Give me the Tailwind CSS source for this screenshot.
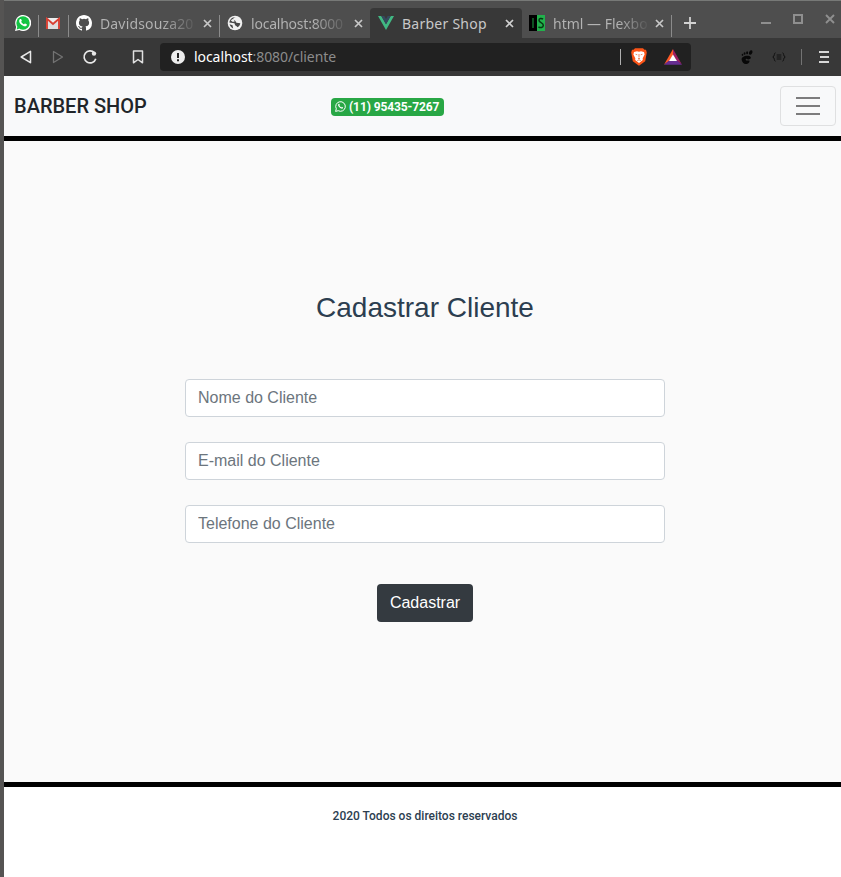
<!DOCTYPE html>
<html lang="pt-BR">
<head>
<meta charset="utf-8">
<title>Barber Shop</title>
<script src="https://cdn.jsdelivr.net/npm/@tailwindcss/browser@4"></script>
</head>
<body class="w-[841px] h-[877px] overflow-hidden bg-[#4e4e4e] border-l-4 border-[#555453] font-['Liberation_Sans',sans-serif]">
<div class="flex h-full flex-col">
  <!-- Tab strip -->
  <div class="flex h-[38px] shrink-0 items-end border-t border-[#777977] bg-[#4e4e4e] font-['Noto_Sans',sans-serif] text-[14px] text-[#b4b4b4] whitespace-nowrap">
    <div class="flex h-[30px] w-[34px] items-center pl-[11px]">
      <svg class="size-4" viewBox="0 0 16 16"><path d="M0 16l1.2-4.1A8 8 0 1 1 4.3 15z" fill="#fff"/><circle cx="8" cy="8" r="6.7" fill="#13c443"/><path d="M1.6 14.4l.9-3.2 2.2 2.3z" fill="#13c443"/><path d="M5.2 4.1c.4-.3.9-.2 1.1.3l.5 1.2c.1.4-.3.8-.6 1.1.7 1.3 1.6 2.1 2.8 2.6.5-.5.7-.9 1.1-.8l1.6.8c.4.2.1 1.2-.4 1.6-1.4 1-3.5 0-4.9-1.1C4.900 8.400 3.900 6.900 4.200 5.400c.1-.6.5-1 1-1.300z" fill="#fff"/></svg>
    </div>
    <div class="mb-px h-[22px] w-px bg-[#8b8b8b]"></div>
    <div class="flex h-[30px] w-[29px] items-center pl-[6px]">
      <svg class="h-[13px] w-4" viewBox="0 0 16 13"><path d="M1.500 1h13v11h-13z" fill="#eee"/><path d="M3 4l5 4 5-4v8H3z" fill="#dedede"/><path d="M2 12V1.800L8 6.900l6-5.100V12" fill="none" stroke="#d93f32" stroke-width="1.900"/></svg>
    </div>
    <div class="mb-px h-[22px] w-px bg-[#8b8b8b]"></div>
    <div class="flex h-[30px] w-[150px] items-center pl-[7px]">
      <svg class="size-4 shrink-0" viewBox="0 0 16 16" fill="#fff"><path d="M8 0C3.580 0 0 3.580 0 8c0 3.540 2.290 6.530 5.470 7.590.4.070.55-.17.55-.38 0-.19-.01-.82-.01-1.490-2.010.37-2.530-.49-2.690-.94-.09-.23-.48-.94-.82-1.130-.28-.15-.68-.52-.01-.53.63-.01 1.080.58 1.230.82.72 1.210 1.870.87 2.330.66.07-.52.28-.87.51-1.070-1.780-.2-3.640-.89-3.640-3.950 0-.87.31-1.590.82-2.150-.08-.2-.36-1.020.08-2.120 0 0 .67-.21 2.200.82a7.600 7.600 0 0 1 4 0c1.530-1.040 2.200-.82 2.200-.82.44 1.100.16 1.920.08 2.120.51.56.82 1.270.82 2.150 0 3.070-1.870 3.750-3.650 3.950.29.25.54.73.54 1.480 0 1.070-.01 1.930-.01 2.200 0 .21.15.46.55.38A8.010 8.010 0 0 0 16 8c0-4.420-3.580-8-8-8z"/></svg>
      <span class="ml-2 w-[95px] overflow-hidden bg-linear-to-r from-[#b4b4b4] from-65% to-[#b4b4b4]/10 bg-clip-text text-transparent tracking-[.15px]">Davidsouza20</span>
      <svg class="ml-2 size-[9px]" viewBox="0 0 9 9"><path d="M1 1l7 7M8 1L1 8" stroke="#c8c8c8" stroke-width="1.700"/></svg>
    </div>
    <div class="mb-px h-[22px] w-px bg-[#8b8b8b]"></div>
    <div class="flex h-[30px] w-[150px] items-center pl-[7px]">
      <svg class="size-4 shrink-0" viewBox="0 0 16 16"><circle cx="8" cy="8" r="7.300" fill="#f0f0f0"/><path d="M9.500 2.300C7 2.600 5.600 3.500 6.600 4.800c.7.900 2 .7 2.200 2 .2 1.100 1.500 1.300 2.900 1.100l1.600.3c-.3 1.800-1.300 3.200-2.700 4.100L9.300 10.900 7.800 10c.6-1.500-.6-2.200-2.300-2L2.300 7.600C2.600 5 4 3.200 6 2.400z" fill="#484848"/><path d="M6.500 3.500L3.800 5.200l1.600 1.500 2.200.1z" fill="#f0f0f0"/><path d="M2.600 9.300l2.900.9.700 3.200C4.400 12.700 3.200 11.300 2.600 9.300z" fill="#484848"/></svg>
      <span class="ml-2 w-[95px] overflow-hidden bg-linear-to-r from-[#b4b4b4] from-65% to-[#b4b4b4]/10 bg-clip-text text-transparent tracking-[-.22px]">localhost:8000</span>
      <svg class="ml-2 size-[9px]" viewBox="0 0 9 9"><path d="M1 1l7 7M8 1L1 8" stroke="#c8c8c8" stroke-width="1.700"/></svg>
    </div>
    <div class="flex h-[30px] w-[152px] items-center rounded-t bg-[#383838] pl-2 text-[#c8c8c8]">
      <svg class="size-4 shrink-0" viewBox="0 0 16 16"><path d="M0 1h3.300L8 9.300 12.700 1H16L8 15z" fill="#41b883"/><path d="M3.300 1h3L8 4l1.700-3h3L8 9.300z" fill="#35495e"/></svg>
      <span class="ml-2 w-[95px] tracking-[.25px]">Barber Shop</span>
      <svg class="ml-2 size-[9px]" viewBox="0 0 9 9"><path d="M1 1l7 7M8 1L1 8" stroke="#d0d0d0" stroke-width="1.700"/></svg>
    </div>
    <div class="flex h-[30px] w-[149px] items-center pl-[7px]">
      <svg class="size-4 shrink-0" viewBox="0 0 16 16"><path d="M0 0h8v16H0z"/><path d="M8 0h8v16H8z" fill="#22b14c"/><path d="M4 3v10" stroke="#14732f" stroke-width="1.400"/><path d="M14 4.200C12.500 3 10 3.200 10 5.300c0 2.700 4.300 2 4.300 5 0 2.500-3.100 2.800-4.800 1.500" fill="none" stroke="#063813" stroke-width="1.500"/></svg>
      <span class="ml-2 w-[94px] overflow-hidden bg-linear-to-r from-[#b4b4b4] from-70% to-[#b4b4b4]/10 bg-clip-text text-transparent">html — Flexbo</span>
      <svg class="ml-2 size-[9px]" viewBox="0 0 9 9"><path d="M1 1l7 7M8 1L1 8" stroke="#c8c8c8" stroke-width="1.700"/></svg>
    </div>
    <div class="mb-px h-[22px] w-px bg-[#8b8b8b]"></div>
    <div class="flex h-[30px] items-center pl-3">
      <svg class="size-3" viewBox="0 0 12 12"><path d="M6 0v12M0 6h12" stroke="#d2d2d2" stroke-width="1.800"/></svg>
    </div>
    <div class="ml-auto flex h-[37px] items-start gap-[22px] pt-3 pr-[6px]">
      <svg class="size-[10px] overflow-visible" viewBox="0 0 10 10"><path d="M0 10h10" stroke="#8f8f8f" stroke-width="2"/></svg>
      <svg class="size-[10px] overflow-visible" viewBox="0 0 10 10"><path d="M1 2h8v8H1z" fill="none" stroke="#8f8f8f" stroke-width="2"/></svg>
      <svg class="size-[10px] overflow-visible" viewBox="0 0 10 10"><path d="M1 2l8 8M9 2L1 10" stroke="#8f8f8f" stroke-width="1.900"/></svg>
    </div>
  </div>
  <!-- Address bar -->
  <div class="flex h-[38px] shrink-0 items-center bg-[#383838] pb-px font-['Noto_Sans',sans-serif] text-[14px]">
    <svg class="ml-4 h-4 w-3" viewBox="0 0 12 16"><path d="M10.500 2.300v11.400L1.200 8z" fill="none" stroke="#e8e8e8" stroke-width="1.500" stroke-linejoin="round"/></svg>
    <svg class="ml-5 h-4 w-3" viewBox="0 0 12 16"><path d="M1.500 2.500v11L10.500 8z" fill="none" stroke="#737373" stroke-width="1.300" stroke-linejoin="round"/></svg>
    <svg class="ml-[18px] size-4" viewBox="0 0 16 16"><path d="M12.500 3.800A6 6 0 1 0 13.800 9.700" fill="none" stroke="#e8e8e8" stroke-width="1.700"/><circle cx="12" cy="4.600" r="2.200" fill="#e8e8e8"/></svg>
    <svg class="ml-[34px] h-[14px] w-3" viewBox="0 0 12 14"><path d="M1.500 1h9v11.800L6 9.500l-4.500 3.300z" fill="none" stroke="#e0e0e0" stroke-width="1.500" stroke-linejoin="round"/></svg>
    <div class="ml-4 flex h-7 w-[531px] items-center rounded bg-[#212121] pl-[11px] text-[#8c8c8c]">
      <svg class="size-[14px]" viewBox="0 0 14 14"><circle cx="7" cy="7" r="7" fill="#ececec"/><path d="M7 3v5M7 9.300v1.900" stroke="#212121" stroke-width="2"/></svg>
      <span class="-mt-px ml-[9px] whitespace-nowrap tracking-[-.07px]"><span class="text-white">localhost</span>:8080/cliente</span>
      <div class="ml-auto h-4 w-px bg-[#b0b0b0]"></div>
      <svg class="ml-[10px] h-[18px] w-4" viewBox="0 0 16 18"><path d="M4 .3h8l1.500 1.500 1.500 0 .8 2.700-1.600 8.800L8 17.800l-6.200-4.500L.2 4.500 1 1.800l1.500 0z" fill="#fb5417"/><path d="M3 4l3-.7 2 .5 2-.5 3 .7.6 2.500-1.900 3.800.1 1.800L8 15l-3.800-2.900.1-1.800L2.400 6.500z" fill="#fff"/><path d="M4.600 6.300l1.700.5M11.400 6.300l-1.700.5M8 6v3.500M7 10.500h2M6.300 12.600l1.700-.8 1.700.8" fill="none" stroke="#e86b3c" stroke-width=".8"/></svg>
      <svg class="mr-[9px] ml-[17px] h-4 w-[18px]" viewBox="0 0 18 16"><path d="M9 0v7l-4 5-5 3.800z" fill="#ff5a26"/><path d="M9 0l9 15.800-5-3.800L9 6z" fill="#9e1f63"/><path d="M0 15.800l5-4.300h8l5 4.300z" fill="#662d91"/><path d="M9 5.400l4 6.600H5z" fill="#fff"/></svg>
    </div>
    <svg class="ml-[49px] h-[14px] w-[14px]" viewBox="0 0 14 14" fill="#080808"><ellipse cx="10.700" cy="2.500" rx="1.600" ry="2.400" transform="rotate(20 10.700 2.500)"/><ellipse cx="7.100" cy="2.700" rx="1" ry="1.500"/><ellipse cx="4.600" cy="3.500" rx=".9" ry="1.200"/><ellipse cx="2.500" cy="4.800" rx=".8" ry="1.100"/><path d="M1.700 10C.9 7 6 4.900 9.800 6.300c2 1 .8 3.200-1.500 3.100-1.300 0-1.700-.7-2.300-.5-.7.5-.2 1.600.8 1.700l2.600-.2c.5 2.100-1.300 3.600-3.600 3.600-2.200 0-3.700-1.800-4.100-4z"/></svg>
    <svg class="ml-[18px] h-3 w-[14px]" viewBox="0 0 14 12"><path d="M3.500 1.800C1.800 1.800 3 5.300.8 6 3 6.700 1.800 10.200 3.500 10.200M10.500 1.800c1.700 0 .5 3.500 2.700 4.200-2.200.7-1 4.200-2.700 4.200M4.700 4h4.600M4.700 6h4.600M4.700 8h4.600" fill="none" stroke="#111" stroke-width="1"/></svg>
    <div class="ml-[15px] h-4 w-px bg-[#737373]"></div>
    <svg class="ml-[17px] h-3 w-[10px]" viewBox="0 0 10 12"><path d="M0 1h10M1 6h9M0 11h10" stroke="#d7d7d7" stroke-width="2"/></svg>
  </div>
  <!-- Site header -->
  <header class="flex h-[65px] shrink-0 items-center border-b-[5px] border-black bg-[#f8f9fa] pr-[5px] pl-[10px] font-[Roboto,sans-serif]">
    <div class="w-[317px] text-[20px] font-medium text-[#212529]">BARBER SHOP</div>
    <div class="mt-px flex h-[18px] w-[113px] items-center rounded bg-[#28a745] pl-1 text-[12px] font-bold whitespace-nowrap text-white">
      <svg class="mr-[3px] size-[11px] shrink-0" viewBox="0 0 11 11"><path d="M.6 10.400l.7-2.600A4.800 4.800 0 1 1 3.200 9.700z" fill="none" stroke="#fff" stroke-width="1"/><path d="M3.600 2.900c.3-.3.700-.2.8.2l.4.800-.4.700c.4.800 1 1.400 1.900 1.800l.6-.6 1.100.6c.3.200-.1 1-.6 1.200C5.700 8 2.600 5.300 3.100 3.600z" fill="#fff"/></svg>
      <span class="tracking-[-.1px]">(11) 95435-7267</span>
    </div>
    <button aria-label="Menu" class="ml-auto flex h-10 w-14 flex-col items-center justify-center gap-[6px] rounded border border-[#dfe0e1]">
      <span class="h-[2px] w-6 bg-[#7c7c7d]"></span><span class="h-[2px] w-6 bg-[#7c7c7d]"></span><span class="h-[2px] w-6 bg-[#7c7c7d]"></span>
    </button>
  </header>
  <main class="flex h-[641px] shrink-0 flex-col items-center bg-[#fafafa] pt-[150px] pl-[5px]">
    <h1 class="h-[34px] text-[28px] leading-[34px] text-[#2c3e50]">Cadastrar Cliente</h1>
    <form class="mt-[54px] flex flex-col items-center gap-[25px]">
      <input class="h-[38px] w-[480px] rounded border border-[#ced4da] bg-white px-3 text-[16px] placeholder:text-[#6c757d]" placeholder="Nome do Cliente">
      <input class="h-[38px] w-[480px] rounded border border-[#ced4da] bg-white px-3 text-[16px] placeholder:text-[#6c757d]" placeholder="E-mail do Cliente">
      <input class="h-[38px] w-[480px] rounded border border-[#ced4da] bg-white px-3 text-[16px] placeholder:text-[#6c757d]" placeholder="Telefone do Cliente">
      <button type="button" class="mt-4 h-[38px] w-24 rounded bg-[#343a40] text-[16px] text-white">Cadastrar</button>
    </form>
  </main>
  <footer class="flex-1 border-t-[5px] border-black bg-white pt-5 pl-[5px] text-center font-[Roboto,sans-serif] text-[12px] leading-[18px] font-medium text-[#2c3e50]">2020 Todos os direitos reservados</footer>
</div>
</body>
</html>
